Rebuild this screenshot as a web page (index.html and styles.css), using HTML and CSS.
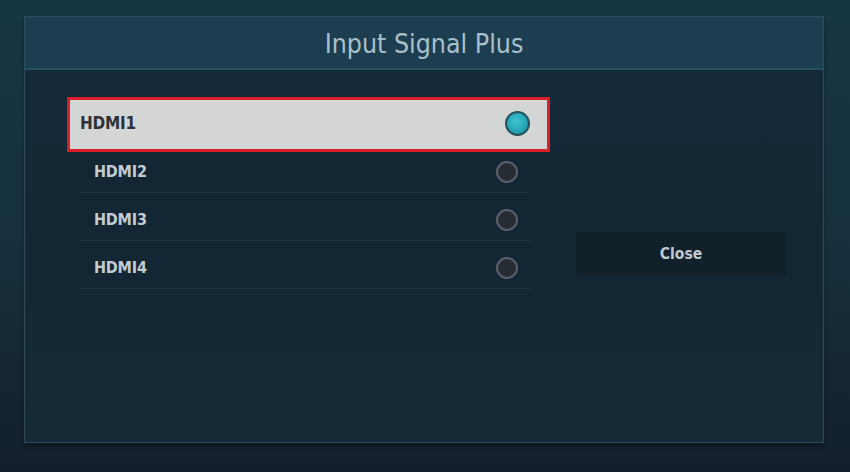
FILE: index.html
```html
<!DOCTYPE html>
<html>
<head>
<meta charset="utf-8">
<link rel="stylesheet" href="styles.css">
</head>
<body>
<div class="screen">
  <div class="dialog">
    <div class="header">Input Signal Plus</div>
    <div class="body">
      <div class="list">
        <div class="row selected"><span class="label">HDMI1</span><span class="radio on"></span></div>
        <div class="row"><span class="label">HDMI2</span><span class="radio"></span></div>
        <div class="row"><span class="label">HDMI3</span><span class="radio"></span></div>
        <div class="row"><span class="label">HDMI4</span><span class="radio"></span></div>
      </div>
      <div class="side">
        <div class="close">Close</div>
      </div>
    </div>
  </div>
</div>
</body>
</html>
```
FILE: styles.css
```css
html, body { margin: 0; padding: 0; }
body {
  width: 850px; height: 472px; overflow: hidden;
  font-family: "DejaVu Sans Condensed", "Open Sans", sans-serif;
}
.screen {
  width: 850px; height: 472px; box-sizing: border-box;
  padding: 16px 26px 0 24px;
  background: linear-gradient(180deg, #173644 0%, #16303d 50%, #141f2d 100%);
}
.dialog {
  width: 800px; height: 427px; box-sizing: border-box;
  border: 1px solid #2e4c5a;
  background: linear-gradient(180deg, #142a38 0%, #132634 60%, #142b37 100%);
  display: flex; flex-direction: column;
  box-shadow: 0 3px 4px rgba(0,0,0,0.35);
}
.header {
  height: 53px; box-sizing: border-box;
  background: #1c3e50;
  border-bottom: 2px solid #264e60;
  color: #a9c0ca;
  font-size: 26.5px;
  display: flex; align-items: center; justify-content: center;
  padding-top: 1px;
}
.body {
  flex: 1; display: flex;
  padding: 27px 0 0 42px;
}
.list { width: 483px; display: flex; flex-direction: column; }
.row {
  height: 48px; box-sizing: border-box;
  margin: 0 18px 0 12px;
  display: flex; align-items: center; justify-content: space-between;
  padding: 6px 14px 0 15px;
  border-bottom: 1px solid #1b3240;
  background: #132633;
}
.row .label {
  color: #c4ccd0; font-weight: bold; font-size: 16px; letter-spacing: -0.2px;
}
.row.selected {
  position: relative; z-index: 1;
  height: 55px; margin: 0 0 -7px 0;
  border: 3px solid #dc2029;
  background: #d4d6d5;
  padding: 0 17px 3px 10px;
}
.row.selected .label { color: #2e3236; font-size: 17px; }
.radio {
  width: 18px; height: 18px; border-radius: 50%;
  border: 2px solid #5b6167;
  background: #252c33;
}
.radio.on {
  width: 21px; height: 21px;
  border: 2px solid #24505a;
  background: radial-gradient(circle at 45% 40%, #3fc4d4 0%, #27a6b8 55%, #1c8695 100%);
}
.side { flex: 1; padding-top: 135px; padding-left: 26px; }
.close {
  width: 210px; height: 44px;
  background: #12202a;
  color: #c0cad0; font-weight: bold; font-size: 15.5px;
  display: flex; align-items: center; justify-content: center;
}
```
